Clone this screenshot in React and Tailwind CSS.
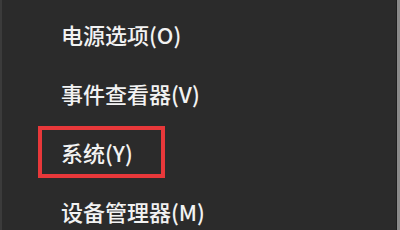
import React from 'react';

const items = ['电源选项(O)', '事件查看器(V)', '系统(Y)', '设备管理器(M)'];

export default function App() {
    return (
        <div className="w-[400px] h-[230px] overflow-hidden flex bg-[#2b2b2b]" style={{ fontFamily: '"Noto Sans CJK SC", sans-serif' }}>
            <div className="w-[2px] h-full bg-[#3b3b3b]" />
            <div className="flex-1 flex flex-col pt-[4px] pl-[59px]">
                {items.map((label, i) => (
                    <div key={label} className="h-[59px] shrink-0 flex items-center text-[22px] font-medium text-[#f2f2f2] leading-none">
                        {i === 2 ? (
                            <span className="h-[52px] w-[127px] ml-[-23px] pl-[19px] flex items-center border-4 border-[#e8383a]">
                                {label}
                            </span>
                        ) : (
                            label
                        )}
                    </div>
                ))}
            </div>
            <div className="w-[1px] h-full bg-[#1f1f1f]" />
            <div className="w-[3px] h-full bg-[#8a8a8a]" />
        </div>
    );
}
